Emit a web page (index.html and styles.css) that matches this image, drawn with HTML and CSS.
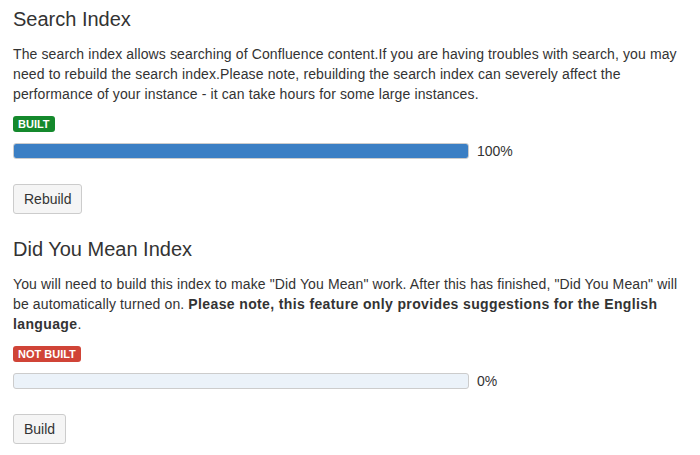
FILE: index.html
```html
<!DOCTYPE html>
<html lang="en">
  <head>
    <meta charset="UTF-8" />
    <title>Content Indexing</title>
    <link rel="stylesheet" href="styles.css">
  </head>
  <body>
    <section class="index-section">
      <h2>Search Index</h2>
      <p>
        The search index allows searching of Confluence content.If you are having troubles with search, you may
        need to rebuild the search index.Please note, rebuilding the search index can severely affect the
        performance of your instance - it can take hours for some large instances.
      </p>
      <span class="lozenge success">Built</span>
      <div class="progress-row">
        <div class="progress"><div class="progress-bar" style="width: 100%"></div></div>
        <span class="progress-value">100%</span>
      </div>
      <button type="button" class="button">Rebuild</button>
    </section>

    <section class="index-section">
      <h2>Did You Mean Index</h2>
      <p>
        You will need to build this index to make "Did You Mean" work. After this has finished, "Did You Mean" will
        be automatically turned on. <strong>Please note, this feature only provides suggestions for the English
        language</strong>.
      </p>
      <span class="lozenge error">Not built</span>
      <div class="progress-row">
        <div class="progress"><div class="progress-bar" style="width: 0%"></div></div>
        <span class="progress-value">0%</span>
      </div>
      <button type="button" class="button">Build</button>
    </section>
  </body>
</html>
```

FILE: styles.css
```css
body {
  margin: 0;
  padding: 5px 13px 0;
  font-family: "Liberation Sans", Arial, sans-serif;
  font-size: 14px;
  line-height: 20px;
  color: #333;
  background-color: #fff;
}

.index-section {
  width: 665px;
}

.index-section + .index-section {
  margin-top: 21px;
}

h2 {
  margin: 0;
  font-size: 20px;
  font-weight: normal;
  line-height: 28px;
}

p {
  margin: 11px 0 0;
  letter-spacing: 0.12px;
}

p strong {
  letter-spacing: 0.37px;
}

.lozenge {
  display: block;
  width: fit-content;
  margin-top: 12px;
  padding: 0 5px;
  border-radius: 3px;
  font-size: 11px;
  font-weight: bold;
  line-height: 16px;
  text-transform: uppercase;
  color: #fff;
}

.lozenge.success {
  background-color: #14892c;
}

.lozenge.error {
  background-color: #d04437;
}

.progress-row {
  display: flex;
  align-items: center;
  margin-top: 9px;
}

.progress {
  box-sizing: border-box;
  width: 456px;
  height: 16px;
  border: 1px solid #ccc;
  border-radius: 3px;
  background-color: #ebf2f9;
  overflow: hidden;
}

.progress-bar {
  height: 100%;
  background-color: #3b7fc4;
}

.progress-value {
  margin-left: 8px;
}

.button {
  display: block;
  margin-top: 23px;
  height: 30px;
  padding: 0 10px;
  border: 1px solid #ccc;
  border-radius: 3px;
  background: #f5f5f5;
  font-family: inherit;
  font-size: 14px;
  color: #333;
}
```
